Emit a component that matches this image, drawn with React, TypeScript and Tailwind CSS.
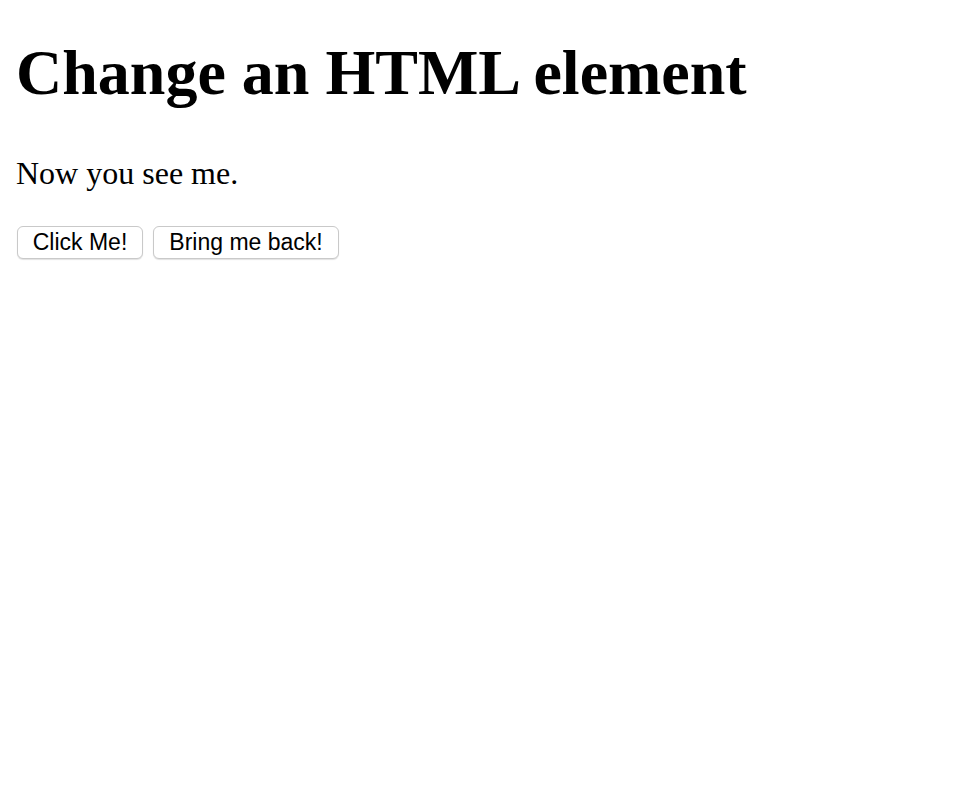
import React, { useState } from "react";

const App = () => {
  const [visible, setVisible] = useState(true);

  return (
    <div className="min-h-screen bg-white px-4 pt-[41px] text-black">
      <h1 className="font-['Liberation_Serif',serif] text-[64px] font-bold leading-[64px]">
        Change an HTML element
      </h1>

      <p className="mt-[52px] h-8 font-['Liberation_Serif',serif] text-[32px] leading-[32px]">
        {visible ? "Now you see me." : ""}
      </p>

      <div className="mt-[37px] flex gap-[10px] pl-px">
        <button
          onClick={() => setVisible(false)}
          className="h-[33px] w-[126px] rounded-md border border-[#c9c9c9] bg-white font-['Liberation_Sans',sans-serif] text-[23px] leading-none shadow-[0_1px_1px_rgba(0,0,0,0.12)]"
        >
          Click Me!
        </button>
        <button
          onClick={() => setVisible(true)}
          className="h-[33px] w-[186px] rounded-md border border-[#c9c9c9] bg-white font-['Liberation_Sans',sans-serif] text-[23px] leading-none shadow-[0_1px_1px_rgba(0,0,0,0.12)]"
        >
          Bring me back!
        </button>
      </div>
    </div>
  );
};

export default App;
